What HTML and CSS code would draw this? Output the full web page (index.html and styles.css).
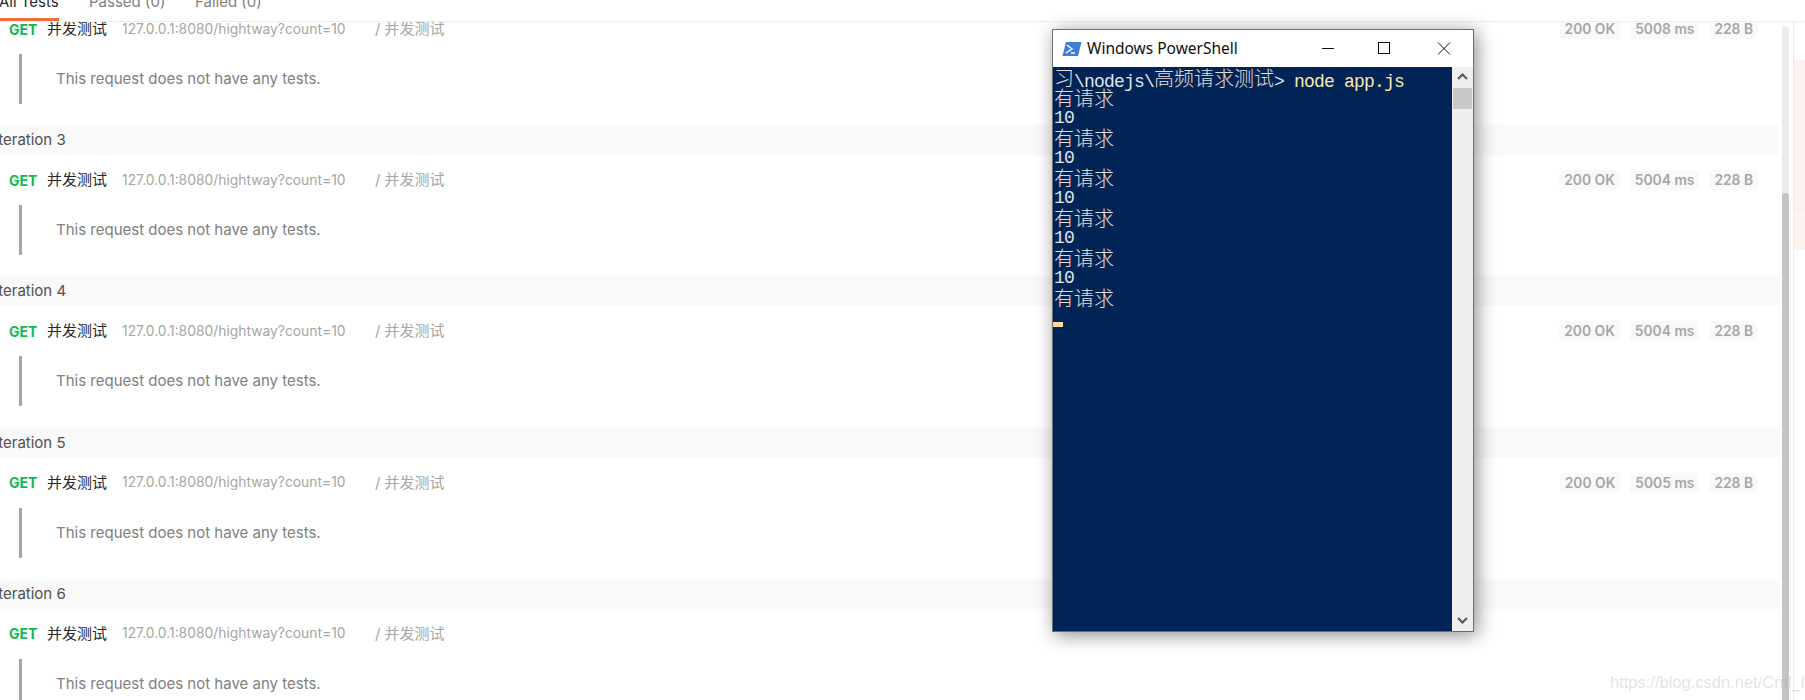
FILE: index.html
```html
<!DOCTYPE html>
<html lang="zh">
<head>
<meta charset="utf-8">
<title>Postman runner</title>
<link rel="stylesheet" href="styles.css">
</head>
<body>
<nav class="tabs">
  <span class="tab active">All Tests</span>
  <span class="tab">Passed (0)</span>
  <span class="tab">Failed (0)</span>
</nav>
<div class="app">
  <main class="results">
    <div class="list">
      <section class="request first">
        <div class="req-line"><span class="method">GET</span><span class="name">并发测试</span><span class="url">127.0.0.1:8080/hightway?count=10</span><span class="folder">/ 并发测试</span>
          <span class="stats"><span class="stat">200 OK</span><span class="stat">5008 ms</span><span class="stat">228 B</span></span></div>
        <p class="note">This request does not have any tests.</p>
      </section>
      <h3 class="iter">Iteration 3</h3>
      <section class="request">
        <div class="req-line"><span class="method">GET</span><span class="name">并发测试</span><span class="url">127.0.0.1:8080/hightway?count=10</span><span class="folder">/ 并发测试</span>
          <span class="stats"><span class="stat">200 OK</span><span class="stat">5004 ms</span><span class="stat">228 B</span></span></div>
        <p class="note">This request does not have any tests.</p>
      </section>
      <h3 class="iter">Iteration 4</h3>
      <section class="request">
        <div class="req-line"><span class="method">GET</span><span class="name">并发测试</span><span class="url">127.0.0.1:8080/hightway?count=10</span><span class="folder">/ 并发测试</span>
          <span class="stats"><span class="stat">200 OK</span><span class="stat">5004 ms</span><span class="stat">228 B</span></span></div>
        <p class="note">This request does not have any tests.</p>
      </section>
      <h3 class="iter">Iteration 5</h3>
      <section class="request">
        <div class="req-line"><span class="method">GET</span><span class="name">并发测试</span><span class="url">127.0.0.1:8080/hightway?count=10</span><span class="folder">/ 并发测试</span>
          <span class="stats"><span class="stat">200 OK</span><span class="stat">5005 ms</span><span class="stat">228 B</span></span></div>
        <p class="note">This request does not have any tests.</p>
      </section>
      <h3 class="iter">Iteration 6</h3>
      <section class="request">
        <div class="req-line"><span class="method">GET</span><span class="name">并发测试</span><span class="url">127.0.0.1:8080/hightway?count=10</span><span class="folder">/ 并发测试</span></div>
        <p class="note">This request does not have any tests.</p>
      </section>
    </div>
  </main>
  <div class="scrollbar"><div class="scroll-thumb"></div></div>
  <aside class="side"><div class="pink"></div><div class="pink-low"></div></aside>
</div>

<div class="ps-window">
  <div class="ps-title">
    <svg class="ps-icon" viewBox="0 0 20 16" width="20" height="16"><path fill="#3f7fd6" d="M4 1h15.500l-3.500 14H.500z"/><path fill="none" stroke="#fff" stroke-width="1.500" d="M5 4l5 4-6 4"/><path stroke="#fff" stroke-width="1.500" d="M9 12h4"/></svg>
    <span class="ps-name">Windows PowerShell</span>
    <span class="ps-controls">
      <svg class="ctl" viewBox="0 0 58 37" width="58" height="37"><path stroke="#111" stroke-width="1" d="M23 18.500h12"/></svg>
      <svg class="ctl" viewBox="0 0 58 37" width="58" height="37"><rect x="21.500" y="12.500" width="11" height="11" fill="none" stroke="#111"/></svg>
      <svg class="ctl" viewBox="0 0 58 37" width="58" height="37"><path stroke="#111" d="M23 12.500l12 12M35 12.500l-12 12"/></svg>
    </span>
  </div>
  <div class="ps-body">
    <div class="console">
      <div class="l"><span class="cjk">习</span>\nodejs\<span class="cjk">高频请求测试</span>&gt; <span class="cmd">node app.js</span></div>
      <div class="l"><span class="cjk">有请求</span></div>
      <div class="l">10</div>
      <div class="l"><span class="cjk">有请求</span></div>
      <div class="l">10</div>
      <div class="l"><span class="cjk">有请求</span></div>
      <div class="l">10</div>
      <div class="l"><span class="cjk">有请求</span></div>
      <div class="l">10</div>
      <div class="l"><span class="cjk">有请求</span></div>
      <div class="l">10</div>
      <div class="l"><span class="cjk">有请求</span></div>
    </div>
    <div class="cursor"></div>
    <div class="ps-scroll">
      <svg viewBox="0 0 19 21" width="19" height="21"><path fill="none" stroke="#555" stroke-width="2" d="M5 12l4.500-4.500L14 12"/></svg>
      <div class="ps-thumb"></div>
      <svg class="ps-down" viewBox="0 0 19 21" width="19" height="21"><path fill="none" stroke="#555" stroke-width="2" d="M5 8l4.500 4.500L14 8"/></svg>
    </div>
  </div>
</div>
<div class="watermark">https://blog.csdn.net/Cml_l</div>
</body>
</html>
```
FILE: styles.css
```css
* { box-sizing: border-box; }
html, body { margin: 0; height: 700px; overflow: hidden; background: #fff; }
body { font-family: Inter, "Noto Sans CJK SC", sans-serif; }
.tabs { height: 22px; border-bottom: 1px solid #ededed; display: flex; align-items: flex-start; gap: 30px; }
.tab { width: 76px; font-size: 15px; line-height: 15px; color: #808080; margin-top: -6px; white-space: nowrap; }
.tab.active { width: 59px; height: 27px; color: #282828; border-bottom: 3px solid #f26b3a; text-indent: -1px; overflow: hidden; }
.app { display: flex; height: 678px; }
.results { width: 1782px; flex: none; overflow: hidden; }
.list { width: 1778px; margin-top: -4px; }
.request { height: 121.330px; padding: 14px 0 0 9px; }
.request.first { height: 107px; padding-top: 0; }
.req-line { display: flex; align-items: center; height: 22px; font-size: 13.850px; white-space: nowrap; padding-right: 20px; }
.method { color: #0cbb52; font-weight: 700; font-size: 14px; width: 38px; }
.name { color: #282828; width: 75px; font-size: 15px; margin-bottom: 3px; }
.url { color: #a6a6a6; width: 253px; margin-bottom: 1px; }
.folder { color: #a6a6a6; font-size: 15px; margin-bottom: 3px; }
.stats { margin-left: auto; display: flex; gap: 10px; }
.stat { background: #f9f9f9; color: #a6a6a6; font-weight: 600; font-size: 13.800px; padding: 0 5px; height: 20px; line-height: 20px; border-radius: 4px; }
.note { margin: 14px 0 0 10px; border-left: 3px solid #a6a6a6; height: 50px; padding-left: 34px; font-size: 15px; line-height: 50px; color: #808080; }
.iter { margin: 0; height: 30px; line-height: 30px; background: #f9f9f9; font-size: 15px; font-weight: 400; color: #505050; text-indent: -6px; overflow: hidden; }
.scrollbar { width: 7px; height: 674px; margin-top: 4px; background: #ececec; border-radius: 3px 3px 0 0; position: relative; flex: none; }
.scroll-thumb { position: absolute; left: 0; right: 0; top: 167px; bottom: 0; background: #c4c4c4; border-radius: 3px 3px 0 0; }
.side { flex: 1; margin-left: 4px; border-left: 1px solid #ededed; }
.pink { margin-top: 38px; height: 150px; background: #fdf2ee; border-bottom: 1px solid #ededed; }
.pink-low { height: 40px; background: #fdf2ee; }
.ps-window { position: absolute; left: 1052px; top: 29px; width: 422px; height: 603px; background: #fff; border: 1px solid #6d6d6d; box-shadow: 3px 3px 18px rgba(0,0,0,.45); display: flex; flex-direction: column; }
.ps-title { height: 37px; flex: none; display: flex; align-items: center; padding-left: 9px; }
.ps-icon { flex: none; }
.ps-name { margin-left: 5px; margin-bottom: 2px; font-family: "Noto Sans", "Noto Sans CJK SC", sans-serif; font-size: 15.500px; color: #111; }
.ps-controls { margin-left: auto; display: flex; }
.ctl { display: block; }
.ps-body { flex: 1; background: #002456; display: flex; justify-content: flex-end; position: relative; }
.console { position: absolute; left: 1px; top: 1px; font-family: "Liberation Mono", "Noto Sans CJK SC", monospace; font-size: 18px; letter-spacing: -0.800px; color: #dfe5ee; }
.l { height: 20px; line-height: 20px; white-space: pre; }
.cjk { font-family: "Noto Sans CJK SC", sans-serif; font-size: 20px; font-weight: 300; letter-spacing: 0; color: #e6dcd2; vertical-align: 1px; }
.cmd { color: #fde9b0; }
.cursor { position: absolute; left: 0; top: 255px; width: 10px; height: 5px; background: #fed8a2; }
.ps-scroll { width: 21px; background: #efefef; padding: 0 0 0 1px; position: relative; }
.ps-scroll svg { display: block; }
.ps-thumb { width: 19px; height: 21px; background: #c8c8c8; }
.ps-down { position: absolute; bottom: 0; left: 1px; }
.watermark { position: absolute; left: 1610px; top: 673px; font-family: "Liberation Sans", sans-serif; font-size: 16.500px; color: rgba(150,150,150,.28); white-space: nowrap; }
```
